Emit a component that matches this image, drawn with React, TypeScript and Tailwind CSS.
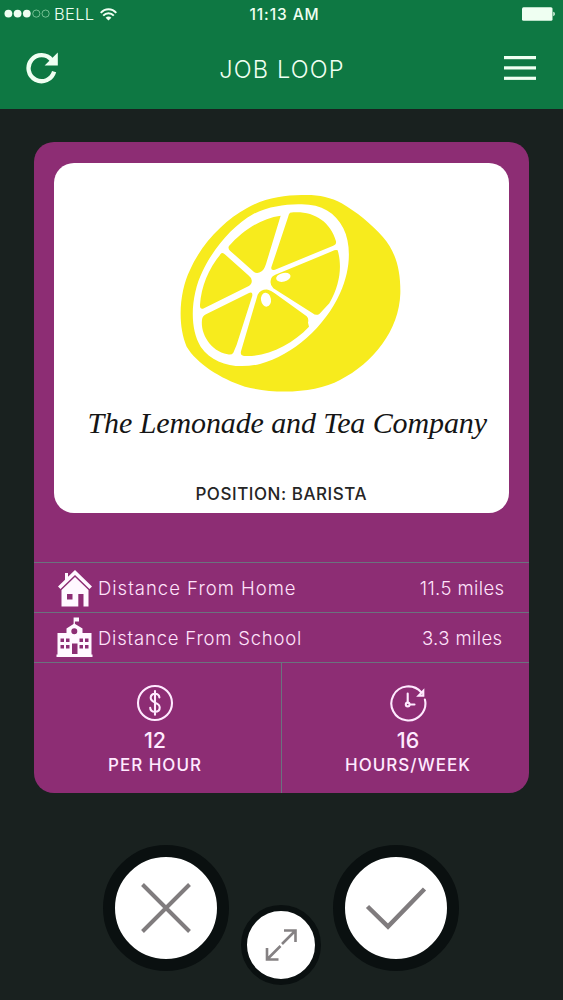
import type { ReactNode } from "react"
import clsx from "clsx"

const StatusBar = () => (
  <div className="relative flex h-7 items-center justify-between pr-2 pl-1 text-[#effff2]">
    <div className="flex items-center">
      <svg width="47" height="10" viewBox="0 0 47 10" fill="currentColor">
        <circle cx="4.4" cy="4.600" r="3.9" />
        <circle cx="13.6" cy="4.600" r="3.9" />
        <circle cx="22.8" cy="4.600" r="3.9" />
        <circle cx="32.3" cy="4.600" r="3.6" fill="none" stroke="#7fc79b" strokeWidth="0.9" />
        <circle cx="41.6" cy="4.600" r="3.6" fill="none" stroke="#7fc79b" strokeWidth="0.9" />
      </svg>
      <span className="ml-[3px] w-[41px] text-[16.5px] leading-7 font-light tracking-[0.3px]">BELL</span>
      <svg className="ml-[5px]" width="17" height="13" viewBox="0 0 17 13" fill="none" stroke="currentColor" strokeWidth="2">
        <path d="M.7 4.9C5-.1 12-.1 16.3 4.9" />
        <path d="M3.2 7.6c3-3.3 7.600-3.300 10.600 0" />
        <path d="M8.500 12.500 5.600 9.700c1.600-1.600 4.200-1.600 5.800 0Z" fill="currentColor" stroke="none" />
      </svg>
    </div>
    <span className="absolute inset-x-0 top-0 pl-[6px] text-center text-[15.5px] leading-[29px] font-medium tracking-[0.9px]">
      11:13 AM
    </span>
    <svg width="33" height="14" viewBox="0 0 33 14" fill="currentColor">
      <rect x="0" y="0.300" width="30.500" height="13.400" rx="1.500" />
      <path d="M31.300 4.800c2 .6 2 3.800 0 4.400Z" />
    </svg>
  </div>
)

const Header = () => (
  <header className="h-[108.500px] bg-[#0e7843]">
    <StatusBar />
    <div className="flex h-20 items-center justify-between pr-[27px] pl-[26px] text-[#effff2]">
      <svg width="34" height="34" viewBox="0 0 34 34" fill="none">
        <path d="M28.100 20.600A13 13 0 1 1 25.800 9.200" stroke="currentColor" strokeWidth="4.300" />
        <path d="M31.800 1.500V14.500H18.600Z" fill="currentColor" />
      </svg>
      <h1 className="pt-[4px] text-[23.5px] font-light tracking-[1.200px]">JOB LOOP</h1>
      <svg width="32" height="26" viewBox="0 0 32 26" fill="currentColor">
        <rect y="1" width="32" height="3.200" />
        <rect y="11.300" width="32" height="3.200" />
        <rect y="21.700" width="32" height="3.200" />
      </svg>
    </div>
  </header>
)

const Lemon = () => (
  <svg className="ml-[23px]" width="245" height="220" viewBox="0 0 735 660">
    <path
      d="M395 45C440 43 480 50 515 70C560 96 605 133 638 170C680 218 692 275 691 340C688 450 610 550 510 600C440 638 320 645 225 620C150 595 80 550 50 500C20 430 30 330 60 270C95 190 165 120 230 85C280 55 340 46 395 45Z"
      fill="#f7eb1d"
    />
    <path
      d="M385 73C450 70 495 95 520 145C545 195 542 270 510 340C465 440 370 525 270 552C200 568 130 555 92 500C55 440 65 340 97 275C130 205 190 135 250 102C295 80 340 74 385 73Z"
      fill="#fff"
    />
    <g fill="#f7eb1d">
      <path d="M332 107C270 115 215 155 177 198Q173 205 180 212L252 276Q262 283 275 274Q282 270 288 252Z" />
      <path d="M360 98C425 90 480 120 498 184Q500 193 488 198L315 269Q302 273 304 262L354 112Q356 101 360 98Z" />
      <path d="M154 220C115 265 94 320 90 374Q89 388 99 386L235 319Q247 312 245 301Q244 293 235 286L166 224Q159 217 154 220Z" />
      <path d="M503 211C516 255 512 310 478 370L448 402Q438 408 428 400L310 325Q298 313 303 298Q304 289 316 284L486 214Q497 208 503 211Z" />
      <path d="M237 339Q248 334 247 347L200 494L190 518Q185 526 173 523C120 512 91 460 96 419Q97 409 108 403Z" />
      <path d="M263 344Q273 327 294 329Q303 331 313 339L410 409Q417 415 414 428L417 440C365 495 290 532 222 528Q210 526 213 514Z" />
    </g>
    <ellipse cx="340" cy="292" rx="22" ry="13" fill="#fff" transform="rotate(-14 340 292)" />
    <ellipse cx="288" cy="359" rx="15" ry="21" fill="#fff" transform="rotate(-8 288 359)" />
  </svg>
)

const HomeIcon = () => (
  <svg width="36" height="38" viewBox="0 0 36 38" fill="#fff8ff">
    <path d="M18 1 35 17.500 32.500 20 18 6 3.500 20 1 17.500 8 10.700V4h3v3.800Z" />
    <path d="M18 8 31.500 21V37.500H26.500V25H21.300V37.500H4.500V21ZM10 25V30.500H15.500V25Z" fillRule="evenodd" />
  </svg>
)

const SchoolIcon = () => (
  <svg width="37" height="41" viewBox="0 0 37 41" fill="#fff8ff">
    <path d="M17.600.500H23V4.500H18.900V8H17.600Z" />
    <path
      d="M18.300 6.500 26.500 11.500V16H35.500V37.500H36.500V40H.500V37.500H1.500V16H10.500V11.500ZM18.300 11.200a3 3 0 1 0 0 6 3 3 0 0 0 0-6ZM4.500 21.500V25H8V21.500ZM10 21.500V25H13.500V21.500ZM23.500 21.500V25H27V21.500ZM29 21.500V25H32.500V21.500ZM4.500 28V31.500H8V28ZM10 28V31.500H13.500V28ZM23.500 28V31.500H27V28ZM29 28V31.500H32.500V28ZM16 26.500V37H21.500V26.500Z"
      fillRule="evenodd"
    />
  </svg>
)

const DollarIcon = () => (
  <svg width="38" height="38" viewBox="0 0 38 38" fill="none" stroke="#ffeaff" strokeWidth="2.100" strokeLinecap="round">
    <circle cx="19" cy="19" r="17" />
    <path d="M23.400 13.400c-.3-2.600-2-3.600-4.400-3.600-2.600 0-4.300 1.500-4.300 4 0 5.700 9 3.900 9 9.700 0 2.900-2 4.300-4.700 4.300-2.800 0-4.700-1.300-4.800-4.100M19 7v23.800" />
  </svg>
)

const ClockIcon = () => (
  <svg width="38" height="38" viewBox="0 0 38 38" fill="none" stroke="#ffeaff" strokeWidth="2.100" strokeLinecap="round">
    <path d="M35.900 15.500A17 17 0 1 1 32.200 8.300" />
    <path d="M34.300 6.800V11.600H29.600ZM18.700 9.500V18.300M21.500 20.500H25.500" />
    <circle cx="18.700" cy="20.500" r="1.900" />
  </svg>
)

type RowProps = {
  icon: ReactNode
  label: string
  value: string
  labelClass: string
  valueClass: string
}

const DistanceRow = ({ icon, label, value, labelClass, valueClass }: RowProps) => (
  <div className="flex h-[50px] items-center border-t border-[#6b727e] text-[18.500px] leading-6 font-light text-[#ffe3fb]">
    <span className="flex w-[64px] shrink-0 justify-end pr-[5px]">{icon}</span>
    <span className={clsx("whitespace-nowrap", labelClass)}>{label}</span>
    <span className={clsx("ml-auto whitespace-nowrap", valueClass)}>{value}</span>
  </div>
)

type StatProps = {
  icon: ReactNode
  value: string
  unit: string
  className?: string
}

const Stat = ({ icon, value, unit, className }: StatProps) => (
  <div className={clsx("flex flex-col items-center pt-[21px] text-[#ffeaff]", className)}>
    {icon}
    <span className="mt-[6px] text-[21.500px] leading-6 font-medium">{value}</span>
    <span className="mt-px text-[17px] leading-6 font-medium tracking-[1px]">{unit}</span>
  </div>
)

const JobCard = () => (
  <section className="mx-auto mt-[33.500px] flex h-[651px] w-[495px] flex-col overflow-hidden rounded-[20px] bg-[#8d2d74] pt-[21px]">
    <div className="ml-5 flex h-[350px] w-[454.5px] flex-col items-center rounded-[20px] bg-white pt-[17px]">
      <Lemon />
      <h2 className="mt-[3px] ml-[12px] font-['Liberation_Serif',serif] text-[30px] leading-10 whitespace-nowrap text-[#151515] italic tracking-[-0.100px]">
        The Lemonade and Tea Company
      </h2>
      <p className="mt-[39px] text-[17px] leading-6 font-medium tracking-[0.550px] text-[#252525]">POSITION: BARISTA</p>
    </div>
    <div className="mt-[49px]">
      <DistanceRow
        icon={<HomeIcon />}
        label="Distance From Home"
        value="11.5 miles"
        labelClass="tracking-[1px]"
        valueClass="mr-[24.5px] tracking-[0.4px]"
      />
      <DistanceRow
        icon={<SchoolIcon />}
        label="Distance From School"
        value="3.3 miles"
        labelClass="tracking-[0.8px]"
        valueClass="mr-[26.5px] tracking-[0.4px]"
      />
    </div>
    <div className="flex flex-1 border-t border-[#6b727e]">
      <Stat icon={<DollarIcon />} value="12" unit="PER HOUR" className="w-[248px] border-r border-[#6b727e] pr-[5px]" />
      <Stat icon={<ClockIcon />} value="16" unit="HOURS/WEEK" className="flex-1 pl-[5px]" />
    </div>
  </section>
)

const Actions = () => (
  <nav className="mt-[52px] flex justify-center gap-3 pr-px">
    <button aria-label="Skip" className="flex size-[126px] items-center justify-center rounded-full border-[12px] border-[#0a1010] bg-white">
      <svg width="52" height="52" viewBox="0 0 52 52" stroke="#807c7e" strokeWidth="4">
        <path d="M2.500 2.500 49.500 49.500M49.500 2.500 2.500 49.500" />
      </svg>
    </button>
    <button aria-label="Expand" className="mt-[59.500px] flex size-20 items-center justify-center rounded-full border-[6.500px] border-[#0a1010] bg-white">
      <svg width="34" height="34" viewBox="0 0 34 34" fill="none" stroke="#858183" strokeWidth="2.600">
        <path d="M20 2.500H31.500V14M31.500 2.500 18 16M3 20V31.500H14.500M3 31.500 16.500 18" />
      </svg>
    </button>
    <button aria-label="Apply" className="flex size-[126px] items-center justify-center rounded-full border-[12px] border-[#0a1010] bg-white">
      <svg width="62" height="44" viewBox="0 0 62 44" fill="none" stroke="#807c7e" strokeWidth="4.500">
        <path d="M2.500 20.500 23 40.500 59.500 3" />
      </svg>
    </button>
  </nav>
)

export default function App() {
  return (
    <main className="h-[1000px] w-[563px] overflow-hidden bg-[#19211f] font-[Inter,sans-serif]">
      <Header />
      <JobCard />
      <Actions />
    </main>
  )
}
